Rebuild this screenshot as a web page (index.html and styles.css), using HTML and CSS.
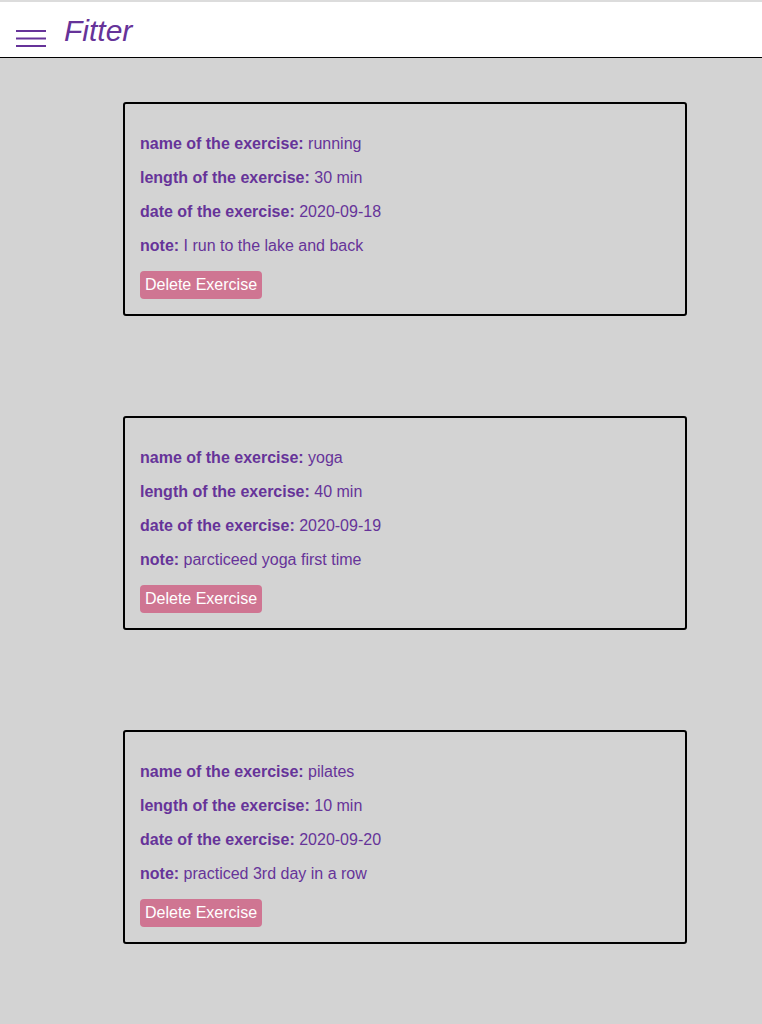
FILE: index.html
```html
<!DOCTYPE html>
<html>
<head>
<meta charset="utf-8">
<title>Fitter</title>
<link rel="stylesheet" href="styles.css">
</head>
<body>
<header class="topbar">
  <button class="menu" aria-label="menu">
    <svg width="30" height="18" viewBox="0 0 30 18"><rect x="0" y="0" width="30" height="2" fill="#663399"/><rect x="0" y="7.5" width="30" height="2" fill="#663399"/><rect x="0" y="15" width="30" height="2" fill="#663399"/></svg>
  </button>
  <h1 class="brand">Fitter</h1>
</header>
<main class="list">
  <section class="card">
    <p><b>name of the exercise:</b> running</p>
    <p><b>length of the exercise:</b> 30 min</p>
    <p><b>date of the exercise:</b> 2020-09-18</p>
    <p><b>note:</b> I run to the lake and back</p>
    <button class="delete">Delete Exercise</button>
  </section>
  <section class="card">
    <p><b>name of the exercise:</b> yoga</p>
    <p><b>length of the exercise:</b> 40 min</p>
    <p><b>date of the exercise:</b> 2020-09-19</p>
    <p><b>note:</b> parcticeed yoga first time</p>
    <button class="delete">Delete Exercise</button>
  </section>
  <section class="card">
    <p><b>name of the exercise:</b> pilates</p>
    <p><b>length of the exercise:</b> 10 min</p>
    <p><b>date of the exercise:</b> 2020-09-20</p>
    <p><b>note:</b> practiced 3rd day in a row</p>
    <button class="delete">Delete Exercise</button>
  </section>
</main>
</body>
</html>
```
FILE: styles.css
```css
html, body {
  margin: 0;
  padding: 0;
}
body {
  background: #d3d3d3;
  font-family: "Liberation Sans", Arial, sans-serif;
  color: #663399;
  min-height: 1024px;
}
.topbar {
  background: #fff;
  border-top: 2px solid #dcdcdc;
  border-bottom: 1px solid #000;
  height: 55px;
  display: flex;
  align-items: center;
  box-sizing: content-box;
}
.menu {
  background: none;
  border: 0;
  padding: 0;
  margin: 0 0 0 16px;
  width: 30px;
  height: 18px;
  display: block;
  align-self: flex-start;
  margin-top: 28px;
}
.menu svg { display: block; }
.brand {
  margin: 0 0 0 18px;
  font-size: 30px;
  font-style: italic;
  font-weight: normal;
  color: #663399;
  line-height: 1;
  position: relative;
  top: 1px;
}
.list {
  display: flex;
  flex-direction: column;
  gap: 100px;
  padding: 44px 0 80px 123px;
}
.card {
  width: 530px;
  border: 2px solid #000;
  border-radius: 3px;
  padding: 31px 15px 15px;
  display: flex;
  flex-direction: column;
  align-items: flex-start;
  gap: 16px;
  box-sizing: content-box;
}
.card p {
  margin: 0;
  font-size: 16px;
  line-height: 18px;
}
.card b {
  font-weight: bold;
}
.delete {
  margin-top: 0;
  background: #cf7592;
  color: #fff;
  border: 0;
  border-radius: 4px;
  font-family: "Liberation Sans", Arial, sans-serif;
  font-size: 16px;
  line-height: 18px;
  padding: 5px 5px 5px;
}
```
